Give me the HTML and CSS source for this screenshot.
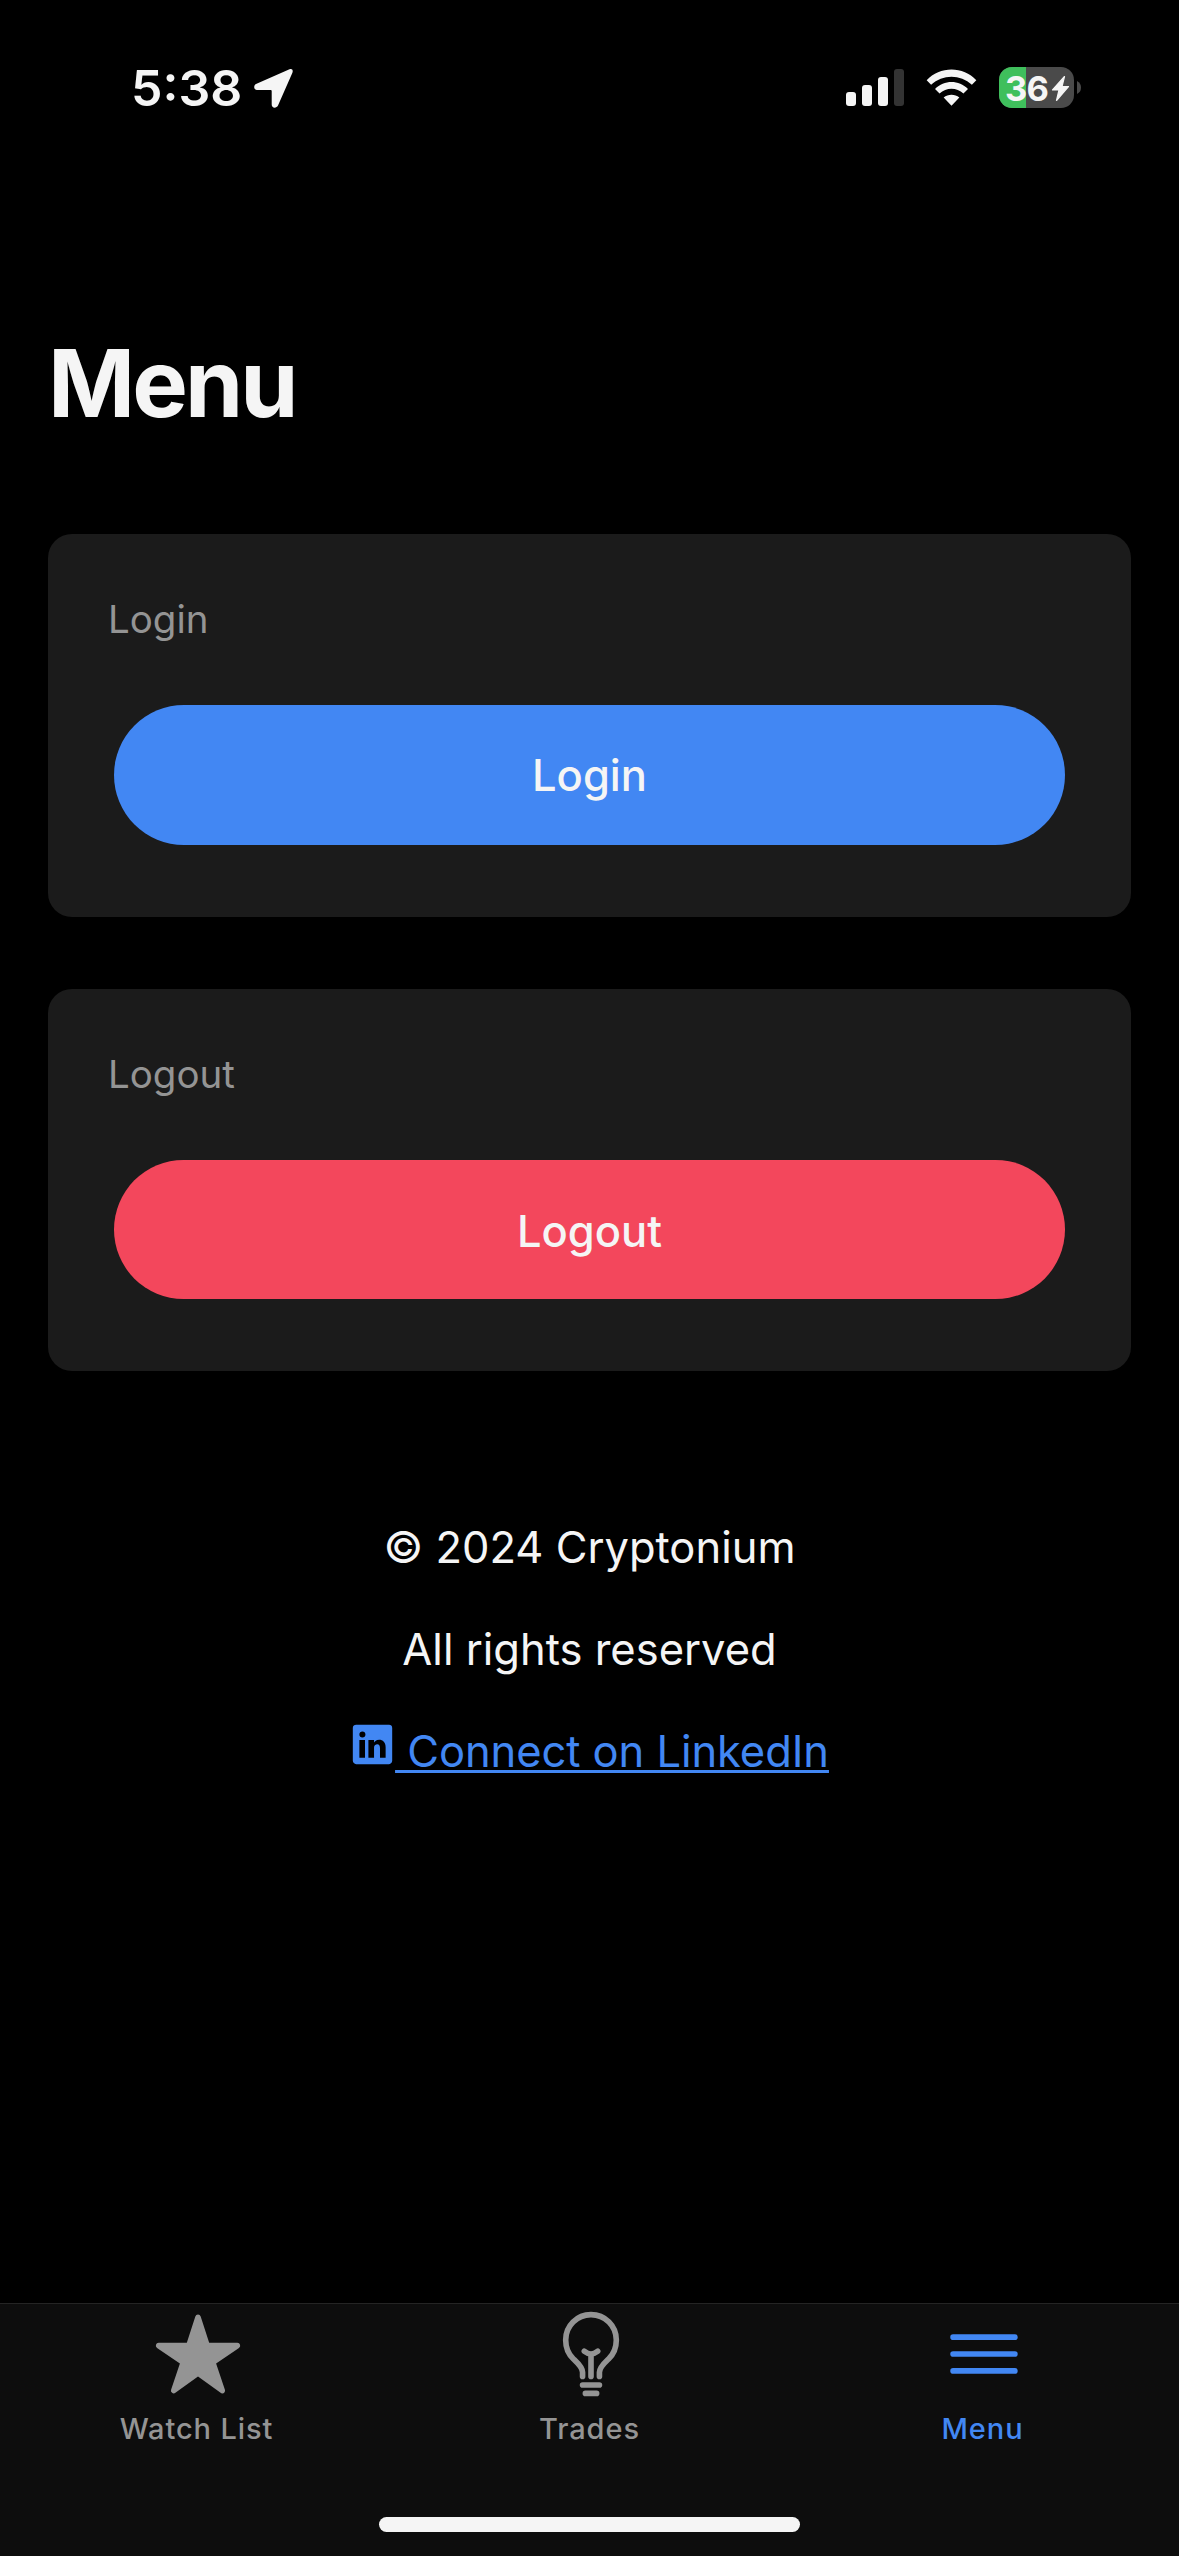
FILE: index.html
```html
<!DOCTYPE html>
<html lang="en">
<head>
<meta charset="utf-8">
<title>Menu</title>
<link rel="stylesheet" href="styles.css">
</head>
<body>
<div class="screen">
  <header class="status">
    <div class="status-left">
      <span class="time">5:38</span>
      <svg class="location" width="41" height="41" viewBox="0 0 41 41"><path d="M36.500 2.300 3 17C.2 18.500.8 23 4 23H17.700Q18.700 23 18.700 24V37.500C18.700 41.500 23.500 41.500 25 38.500L39.300 6C40.500 3 39 1.300 36.500 2.300Z"/></svg>
    </div>
    <div class="status-right">
      <svg width="58" height="38" viewBox="0 0 58 38"><g fill="#f5f5f5"><rect y="23" width="10" height="14" rx="3"/><rect x="16" y="16" width="10" height="21" rx="3"/><rect x="32" y="8" width="10" height="29" rx="3"/></g><rect x="48" width="10" height="37" rx="3" fill="#333"/></svg>
      <svg class="wifi" width="51" height="38" viewBox="0 0 52 38"><path d="M.7 11.100C14-3.500 38-3.500 51.300 11.100L46.800 15.800C35 4.800 17 4.800 5.200 15.800ZM9.200 20C18.500 10.600 33.500 10.600 42.800 20L38.200 24.700C31.300 18 20.700 18 13.800 24.700ZM18 28.800C22.500 25 29.500 25 34 28.800L26 37Z"/></svg>
      <svg class="battery" width="83" height="42" viewBox="0 0 83 42"><defs><clipPath id="body"><rect width="75" height="41" rx="13"/></clipPath></defs><g clip-path="url(#body)"><rect width="75" height="41" fill="#4a4a4a"/><rect width="27" height="41" fill="#3fbf5c"/></g><path d="M78 14Q82 16 82 20.500T78 27Z" fill="#4a4a4a"/><path class="bolt" d="M65.500 9.500 53.500 23H60L57.500 33.500 69.500 19.500H63Z"/><text x="6" y="33.500">36</text></svg>
    </div>
  </header>
  <main>
    <h1>Menu</h1>
    <section class="card"><h2>Login</h2><button class="btn primary">Login</button></section>
    <section class="card"><h2>Logout</h2><button class="btn danger">Logout</button></section>
    <footer>
      <p>© 2024 Cryptonium</p>
      <p>All rights reserved</p>
      <p><a href="#"><svg class="linkedin" viewBox="0 0 512 512"><path d="M444.170 32H70.280C49.850 32 32 46.700 32 66.890v374.720C32 461.910 49.850 480 70.280 480h373.780c20.540 0 35.940-18.210 35.940-38.390V66.890C480.120 46.700 464.600 32 444.170 32zm-273.300 373.430h-64.180V205.880h64.180zM141 175.540h-.46c-20.540 0-33.840-15.290-33.840-34.430 0-19.490 13.650-34.420 34.650-34.420s33.850 14.820 34.310 34.420c-.01 19.140-13.310 34.430-34.660 34.430zm264.430 229.890h-64.180V296.320c0-26.140-9.340-44-32.560-44-17.740 0-28.240 12-32.910 23.690-1.750 4.200-2.220 9.920-2.220 15.760v113.660h-64.180V205.880h64.180v27.770c9.340-13.300 23.930-32.440 57.880-32.440 42.130 0 74 27.770 74 87.640z"/></svg><span class="link-text">&nbsp;Connect on LinkedIn</span></a></p>
    </footer>
  </main>
  <nav>
    <div class="tabs">
      <a class="tab"><svg viewBox="0 0 512 512"><path fill="currentColor" d="M394 480a16 16 0 01-9.390-3L256 383.760 127.390 477a16 16 0 01-24.550-18.080L153 310.350 23 221.200a16 16 0 019-29.200h160.380l48.400-148.950a16 16 0 0130.440 0l48.400 149H480a16 16 0 019.050 29.200L359 310.350l50.130 148.530A16 16 0 01394 480z"/></svg><span>Watch List</span></a>
      <a class="tab"><svg viewBox="0 0 512 512" class="line"><path d="M304 384v-24c0-29 31.540-56.430 52-76 28.840-27.570 44-64.610 44-108 0-80-63.730-144-144-144a143.600 143.600 0 00-144 144c0 41.840 15.810 81.390 44 108 20.350 19.210 52 46.700 52 76v24M224 480h64M208 432h96M256 384V256M294 240s-21.510 16-38 16-38-16-38-16"/></svg><span>Trades</span></a>
      <a class="tab active"><svg viewBox="0 0 512 512" class="line"><path d="M80 160h352M80 256h352M80 352h352"/></svg><span>Menu</span></a>
    </div>
    <div class="home"></div>
  </nav>
</div>
</body>
</html>
```
FILE: styles.css
```css
* { box-sizing: border-box; }
body { margin: 0; background: #000; color: #f5f5f5; font-family: Inter, "Liberation Sans", sans-serif; }
.screen { display: flex; flex-direction: column; width: 1179px; height: 2556px; overflow: hidden; }
.status { display: flex; justify-content: space-between; height: 320px; padding: 67px 97px 0 131px; }
.status-left, .status-right { display: flex; align-items: flex-start; }
.time { font-size: 50px; font-weight: 600; line-height: 42px; width: 122px; white-space: nowrap; }
.location, .wifi { fill: #f5f5f5; }
.status-right { gap: 22px; padding-top: 2px; }
.battery { margin-top: -2px; }
.battery text { font-size: 34.500px; font-weight: 700; letter-spacing: -0.8px; fill: #f5f5f5; }
.bolt { fill: #f5f5f5; stroke: #f5f5f5; stroke-width: 1.200px; stroke-linejoin: round; }
main { flex: 1; padding: 0 48px; }
h1 { margin: 0 0 87px; font-size: 93.500px; line-height: 127px; font-weight: 700; letter-spacing: -2.900px; }
.card { height: 383px; margin-bottom: 72px; padding: 61px 66px 0; background: #1b1b1b; border-radius: 24px; }
h2 { margin: 0 0 62px -6px; font-size: 38.500px; line-height: 48px; font-weight: 400; color: #949494; }
.btn { display: block; width: 951px; height: 140px; padding: 0; border: 0; border-radius: 70px; font: 500 43.500px/140px Inter, sans-serif; color: #f5f5f5; }
.primary { background: #4287f3; }
.danger { height: 139px; padding-top: 1px; background: #f3475c; }
.card:nth-of-type(2) { height: 382px; }
footer { padding-top: 74px; text-align: center; }
footer p { margin: 0 0 42px; font-size: 43.500px; line-height: 60px; white-space: nowrap; }
footer a { display: flex; justify-content: center; color: #4287f3; text-decoration: none; }
.linkedin { width: 45px; height: 45px; margin-top: 1px; fill: currentColor; }
.link-text { letter-spacing: -0.070px; text-decoration: underline; text-decoration-thickness: 3px; text-underline-offset: 3px; text-decoration-skip-ink: none; }
nav { height: 253px; background: #0d0d0d; border-top: 1px solid #242424; }
.tabs { display: grid; grid-template-columns: repeat(3, 1fr); height: 213px; padding-top: 5px; }
.tab { display: flex; flex-direction: column; align-items: center; color: #949494; font-size: 29px; font-weight: 500; line-height: 36px; letter-spacing: 0.900px; }
.tab svg { width: 90px; height: 90px; margin: 0 0 12px 3px; }
.line { fill: none; stroke: currentColor; stroke-width: 32px; stroke-linecap: round; stroke-linejoin: round; }
.active { color: #4287f3; }
.home { width: 421px; height: 15px; margin: 0 auto; border-radius: 8px; background: #f5f5f5; }
```
